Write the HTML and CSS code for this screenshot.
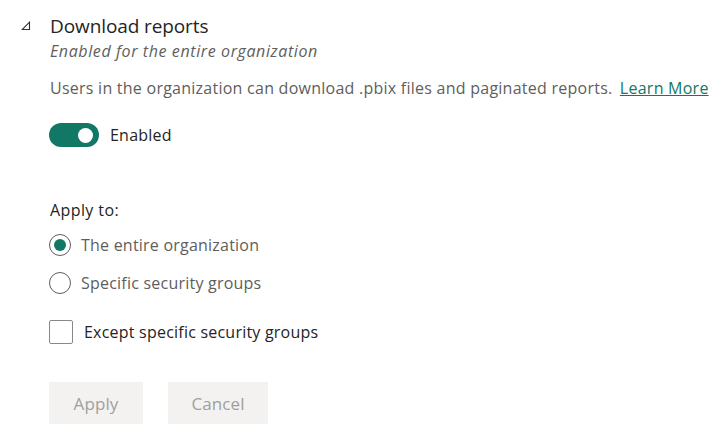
FILE: index.html
```html
<!DOCTYPE html>
<html lang="en">
<head>
<meta charset="utf-8">
<title>Download reports</title>
<link rel="stylesheet" href="styles.css">
</head>
<body>
<div class="setting">
  <div class="header">
    <svg class="chevron" width="10" height="10" viewBox="0 0 10 10" aria-hidden="true">
      <path d="M8.5 1.2 L8.5 8.5 L1.2 8.5 Z" fill="none" stroke="#323130" stroke-width="1.1" stroke-linejoin="miter"/>
    </svg>
    <div class="titles">
      <div class="title">Download reports</div>
      <div class="subtitle">Enabled for the entire organization</div>
    </div>
  </div>
  <div class="body">
    <p class="desc">Users in the organization can download .pbix files and paginated reports. <a class="link" href="#">Learn More</a></p>
    <div class="toggle-row">
      <span class="toggle"><span class="knob"></span></span>
      <span class="toggle-label">Enabled</span>
    </div>
    <div class="apply-label">Apply to:</div>
    <div class="radio-row first">
      <span class="radio checked"><span class="dot"></span></span>
      <span class="opt">The entire organization</span>
    </div>
    <div class="radio-row">
      <span class="radio"></span>
      <span class="opt">Specific security groups</span>
    </div>
    <div class="check-row">
      <span class="checkbox"></span>
      <span class="check-label">Except specific security groups</span>
    </div>
    <div class="buttons">
      <button class="btn apply">Apply</button>
      <button class="btn cancel">Cancel</button>
    </div>
  </div>
</div>
</body>
</html>
```

FILE: styles.css
```css
html, body {
  margin: 0;
  padding: 0;
  background: #ffffff;
}
body {
  font-family: "Open Sans", "Noto Sans", sans-serif;
  color: #252423;
  font-size: 16px;
  letter-spacing: 0.22px;
}
.setting {
  padding-top: 13px;
}
.header {
  display: flex;
  align-items: flex-start;
}
.chevron {
  margin-left: 21px;
  margin-top: 8px;
  margin-right: 19px;
  flex: none;
}
.title {
  font-size: 19px;
  line-height: 27px;
  letter-spacing: -0.1px;
  color: #252423;
}
.subtitle {
  font-size: 16px;
  line-height: 22px;
  font-style: italic;
  letter-spacing: 0.6px;
  color: #605e5c;
}
.body {
  padding-left: 50px;
}
.desc {
  margin: 15px 0 0;
  font-size: 16px;
  line-height: 22px;
  letter-spacing: 0.25px;
  color: #605e5c;
}
.link {
  color: #117865;
  text-decoration: underline;
  margin-left: 3px;
}
.toggle-row {
  display: flex;
  align-items: center;
  margin-top: 24px;
  height: 24px;
}
.toggle {
  width: 50px;
  height: 24px;
  border-radius: 12px;
  background: #117865;
  display: flex;
  align-items: center;
  justify-content: flex-end;
  padding-right: 6px;
  box-sizing: border-box;
  margin-left: -1px;
}
.knob {
  width: 15px;
  height: 15px;
  border-radius: 50%;
  background: #ffffff;
}
.toggle-label {
  margin-left: 11px;
  color: #252423;
}
.apply-label {
  margin-top: 52px;
  line-height: 22px;
  letter-spacing: 0.4px;
  color: #252423;
}
.radio-row {
  display: flex;
  align-items: center;
  height: 30px;
  margin-top: 8px;
}
.radio-row.first {
  margin-top: 9px;
}
.radio {
  width: 22px;
  height: 22px;
  box-sizing: border-box;
  border: 1px solid #605e5c;
  border-radius: 50%;
  display: flex;
  align-items: center;
  justify-content: center;
  margin-left: -1px;
}
.dot {
  width: 12px;
  height: 12px;
  border-radius: 50%;
  background: #117865;
}
.opt {
  margin-left: 10px;
  color: #605e5c;
}
.check-row {
  display: flex;
  align-items: center;
  height: 30px;
  margin-top: 19px;
}
.checkbox {
  width: 24px;
  height: 24px;
  box-sizing: border-box;
  border: 1px solid #8a8886;
  border-radius: 2px;
  margin-left: -1px;
}
.check-label {
  margin-left: 11px;
  color: #252423;
}
.buttons {
  display: flex;
  gap: 25px;
  margin-top: 35px;
}
.btn {
  font-family: inherit;
  font-size: 17px;
  letter-spacing: 0.1px;
  height: 42px;
  border: none;
  border-radius: 0;
  background: #f3f2f1;
  color: #a19f9d;
  padding: 0;
}
.apply {
  width: 94px;
  margin-left: -1px;
}
.cancel {
  width: 100px;
}
```
